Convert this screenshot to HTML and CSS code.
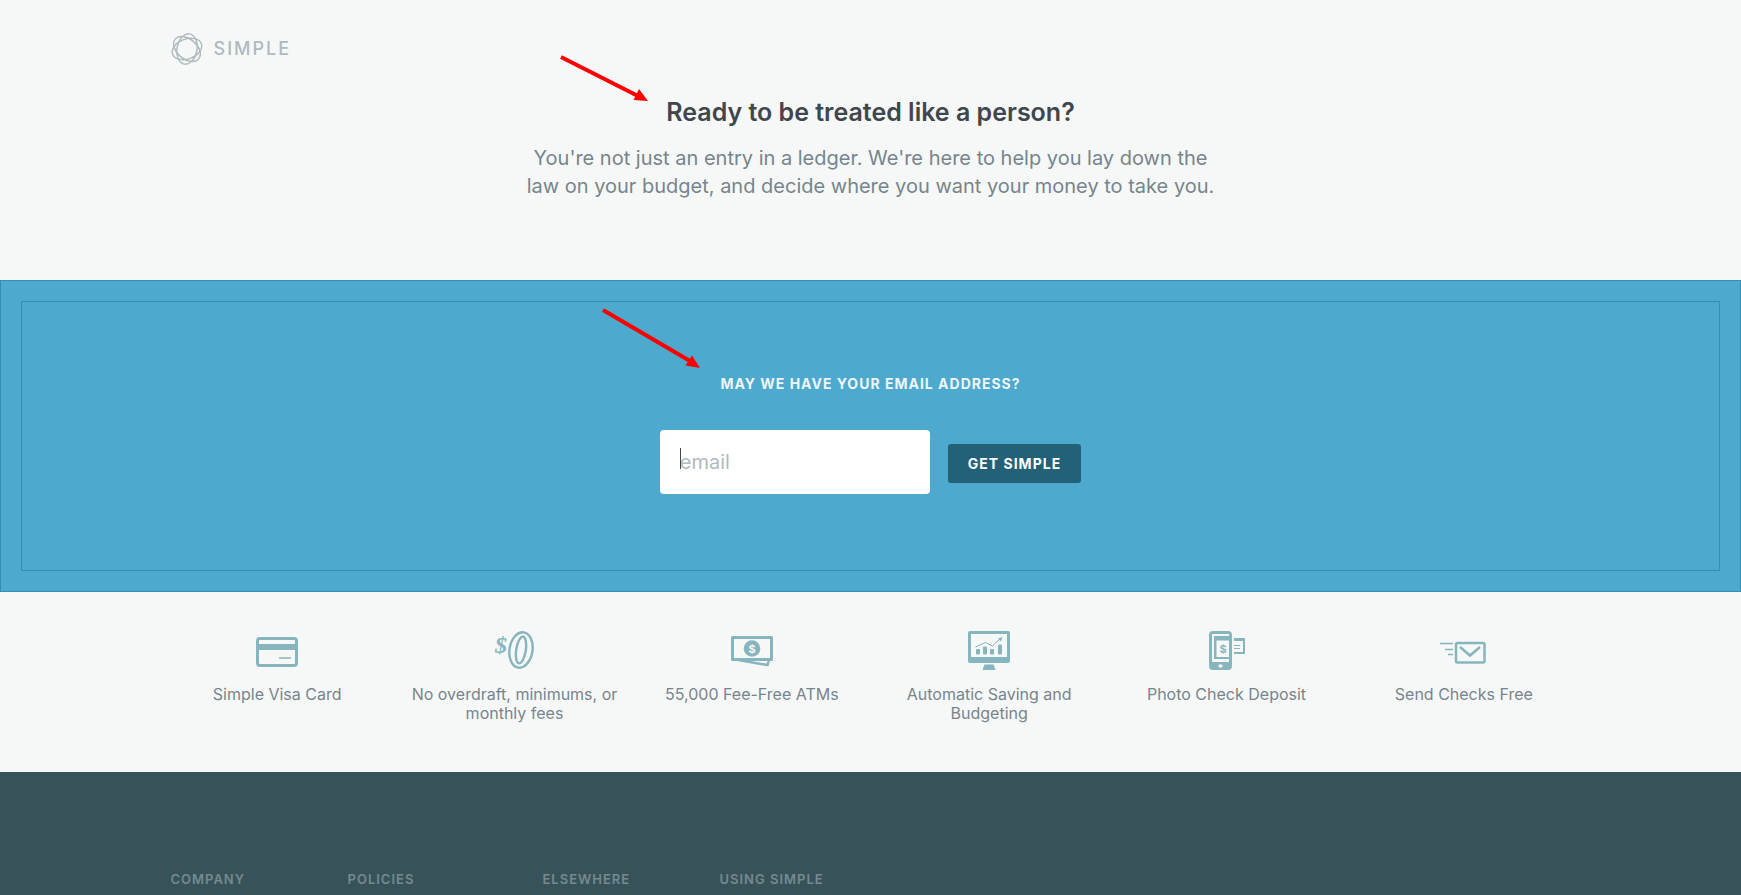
FILE: index.html
```
<!DOCTYPE html>
<html lang="en">
<head>
  <meta charset="UTF-8">
  <meta name="viewport" content="width=device-width, initial-scale=1">
  <title>Simple</title>
  <link rel="stylesheet" href="styles.css">
</head>
<body>
  <header class="header">
    <div class="container">
      <a href="#" class="logo">
        <svg width="32" height="32" viewBox="-16 -16 32 32" fill="none" stroke="#afbabf" stroke-width="1.4">
          <ellipse rx="15.3" ry="10" transform="rotate(40)"/>
          <ellipse rx="15.3" ry="10" transform="rotate(100)"/>
          <ellipse rx="15.3" ry="10" transform="rotate(160)"/>
        </svg>
        <span>SIMPLE</span>
      </a>
    </div>
    <div class="intro">
      <h1>Ready to be treated like a person?</h1>
      <p>You're not just an entry in a ledger. We're here to help you lay down the<br>law on your budget, and decide where you want your money to take you.</p>
    </div>
    <svg class="arrow arrow-title" width="90" height="50" viewBox="0 0 90 50">
      <path d="M2 2L79 41" stroke="#f00" stroke-width="4"/>
      <path d="M89 46L74.5 45L80 34z" fill="#f00"/>
    </svg>
  </header>

  <section class="signup">
    <div class="signup-frame">
      <form class="signup-form">
        <label for="email">MAY WE HAVE YOUR EMAIL ADDRESS?</label>
        <div class="signup-row">
          <div class="field">
            <input type="email" id="email" placeholder="email">
            <span class="caret"></span>
          </div>
          <button type="submit">GET SIMPLE</button>
        </div>
      </form>
    </div>
    <svg class="arrow arrow-form" width="100" height="62" viewBox="0 0 100 62">
      <path d="M2 2L89 53" stroke="#f00" stroke-width="4"/>
      <path d="M99 60L84.5 57.5L91 47.5z" fill="#f00"/>
    </svg>
  </section>

  <ul class="features">
    <li>
      <svg width="48" height="40" viewBox="0 0 48 40">
        <rect x="4.5" y="7.5" width="39" height="27" rx="2.5" fill="none" stroke="#86b5bd" stroke-width="3"/>
        <path d="M4 13h40v6H4z" fill="#86b5bd"/>
        <path d="M26 27h12" stroke="#86b5bd" stroke-width="1.5"/>
      </svg>
      <span>Simple Visa Card</span>
    </li>
    <li>
      <svg width="48" height="40" viewBox="0 0 48 40">
        <text class="dollar-serif" x="5" y="22">$</text>
        <g transform="translate(31 19) rotate(9)" fill="none" stroke="#86b5bd" stroke-width="2.4">
          <ellipse rx="11.5" ry="17.8"/>
          <ellipse rx="4.8" ry="13.5"/>
        </g>
      </svg>
      <span>No overdraft, minimums, or monthly fees</span>
    </li>
    <li>
      <svg width="48" height="40" viewBox="0 0 48 40" fill="none" stroke="#86b5bd">
        <rect x="4.5" y="6.5" width="39" height="22" stroke-width="3" stroke-linejoin="round"/>
        <path d="M10 29L39.5 34L41 29" stroke-width="2.5"/>
        <circle cx="24" cy="17.5" r="8.3" fill="#86b5bd" stroke="none"/>
        <text class="dollar-small dollar-coin" x="24" y="21.5">$</text>
      </svg>
      <span>55,000 Fee-Free ATMs</span>
    </li>
    <li>
      <svg width="48" height="40" viewBox="0 0 48 40" fill="#86b5bd">
        <path fill-rule="evenodd" d="M5 0h38a2 2 0 0 1 2 2v28a2 2 0 0 1-2 2H5a2 2 0 0 1-2-2V2a2 2 0 0 1 2-2zM6 3v23h36V3z"/>
        <path d="M19.5 33.5h9l2 5.5h-13z"/>
        <rect x="11" y="18" width="4" height="5.5" rx="1"/>
        <rect x="18" y="15.5" width="4" height="8" rx="1"/>
        <rect x="25" y="18" width="4" height="5.5" rx="1"/>
        <rect x="33" y="13.5" width="4" height="10" rx="1"/>
        <path d="M10.5 16L20.5 11.5L27.5 15L35 8" fill="none" stroke="#86b5bd"/>
        <path d="M37.5 6L36 10.5L33 7.5z"/>
      </svg>
      <span>Automatic Saving and Budgeting</span>
    </li>
    <li>
      <svg width="48" height="40" viewBox="0 0 48 40" fill="#86b5bd">
        <path fill-rule="evenodd" d="M11 0h15a4 4 0 0 1 4 4v31a4 4 0 0 1-4 4H11a4 4 0 0 1-4-4V4a4 4 0 0 1 4-4zM10 3v28h17v-3H12V5h15V3z"/>
        <path d="M14.5 9.5H27V26H14.5z" fill="#f6f8f7"/>
        <ellipse cx="18.5" cy="35" rx="2.2" ry="1.7" fill="#f6f8f7"/>
        <text class="dollar-small dollar-check" x="21" y="22">$</text>
        <path d="M32 7h11v16H32v-2h9v-11h-9zM32 14h6v1h-6zM32 17h6v1h-6z"/>
      </svg>
      <span>Photo Check Deposit</span>
    </li>
    <li>
      <svg width="48" height="40" viewBox="0 0 48 40" fill="none" stroke="#86b5bd">
        <rect x="16" y="12" width="28.5" height="19.5" rx="1.5" stroke-width="2.5"/>
        <path d="M20 16l10 8.5L40 16" stroke-width="2.5"/>
        <path d="M0 12.5h13M5 18.5h8M8 23.5h5" stroke-width="1.5"/>
      </svg>
      <span>Send Checks Free</span>
    </li>
  </ul>

  <footer class="footer">
    <div class="container footer-links">
      <h2>COMPANY</h2>
      <h2>POLICIES</h2>
      <h2>ELSEWHERE</h2>
      <h2>USING SIMPLE</h2>
    </div>
  </footer>
</body>
</html>
```

FILE: styles.css
```
* {
  box-sizing: border-box;
}

body {
  margin: 0;
  min-height: 100vh;
  display: flex;
  flex-direction: column;
  background-color: #f6f8f7;
  color: #76858d;
  font-family: Inter, "Liberation Sans", sans-serif;
}

.container {
  width: 100%;
  max-width: 1400px;
  margin: 0 auto;
}

/* header */
.header {
  position: relative;
  padding: 32px 0 80px;
}

.logo {
  display: flex;
  align-items: center;
  gap: 11px;
  color: #afbabf;
  font-size: 18px;
  font-weight: 500;
  letter-spacing: 2px;
  line-height: 34px;
  text-decoration: none;
}

.logo svg {
  display: block;
}

.intro {
  margin-top: 30px;
  text-align: center;
}

.intro h1 {
  margin: 0;
  color: #3f474d;
  font-size: 25px;
  font-weight: 600;
  line-height: 32px;
}

.intro p {
  margin: 16px 0 0;
  font-size: 20px;
  line-height: 28px;
}

.arrow {
  position: absolute;
  left: 50%;
}

.arrow-title {
  top: 55px;
  margin-left: -312px;
}

.arrow-form {
  top: 27px;
  margin-left: -270px;
}

/* email form */
.signup {
  position: relative;
  padding: 20px;
  background-color: #4da9cd;
  border: 1px solid #338fb5;
}

.signup-frame {
  padding: 72px 0 76px;
  border: 1px solid #338fb5;
}

.signup-form {
  display: flex;
  flex-direction: column;
  align-items: center;
  gap: 36px;
}

.signup-form label {
  color: #edf6fa;
  font-size: 14px;
  font-weight: 700;
  letter-spacing: 1px;
  line-height: 20px;
}

.signup-row {
  display: flex;
  align-items: center;
  gap: 18px;
}

.field {
  position: relative;
}

.field input {
  display: block;
  width: 270px;
  height: 64px;
  padding: 0 20px;
  border: none;
  border-radius: 4px;
  outline: none;
  background-color: #fff;
  color: #3f474d;
  font: inherit;
  font-size: 20px;
}

.field input::placeholder {
  color: #afbabf;
}

.caret {
  position: absolute;
  top: 18px;
  left: 20px;
  width: 1px;
  height: 21px;
  background-color: #3f474d;
}

.signup-row button {
  height: 39px;
  margin-top: 2px;
  padding: 0 20px;
  border: none;
  border-radius: 3px;
  background-color: #236178;
  color: #fff;
  font: inherit;
  font-size: 14px;
  font-weight: 700;
  letter-spacing: 1px;
  cursor: pointer;
}

/* features */
.features {
  display: grid;
  grid-template-columns: repeat(6, 1fr);
  width: 100%;
  max-width: 1424px;
  margin: 0 auto;
  padding: 39px 0 49px;
  list-style: none;
  font-size: 16px;
  line-height: 19px;
  text-align: center;
}

.features li {
  padding: 0 10px;
}

.features svg {
  display: block;
  margin: 0 auto 14px;
}

.dollar-serif {
  fill: #86b5bd;
  font: italic 700 24px "Liberation Serif", serif;
}

.dollar-small {
  stroke: none;
  font-size: 11px;
  font-weight: 700;
  text-anchor: middle;
}

.dollar-coin {
  fill: #f6f8f7;
}

.dollar-check {
  fill: #86b5bd;
}

/* footer */
.footer {
  flex: 1;
  padding: 98px 0 0;
  background-color: #375359;
}

.footer-links {
  display: grid;
  grid-template-columns: 177px 195px 177px auto;
}

.footer h2 {
  margin: 0;
  color: #76898f;
  font-size: 13px;
  font-weight: 600;
  letter-spacing: 1px;
  line-height: 18px;
}
```
